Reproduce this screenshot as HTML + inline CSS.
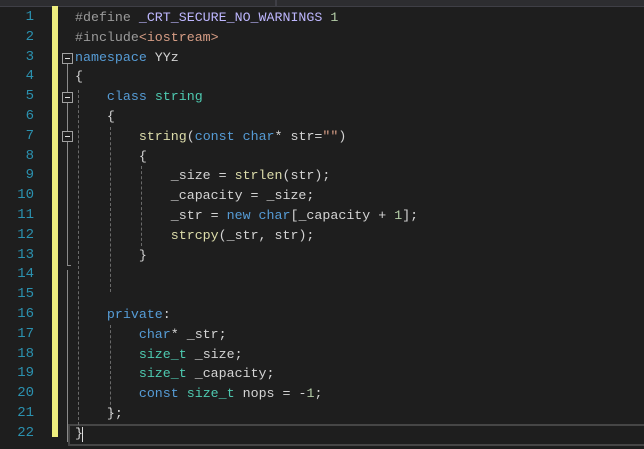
<!DOCTYPE html>
<html><head><style>
body{margin:0;width:644px;height:449px;background:#1e1e1e;overflow:hidden;position:relative;font-family:"Liberation Mono",monospace;}
.top{position:absolute;left:0;top:0;width:644px;height:6px;background:#2d2d30;border-bottom:1px solid #3f3f46;}
.ln{position:absolute;left:0;width:34px;text-align:right;color:#2b91af;font-size:14px;line-height:19.8px;}
.bar{position:absolute;left:52px;top:6px;width:6px;height:431px;background:#eded7e;}
.code{position:absolute;left:75px;top:8px;font-size:13.3px;line-height:19.8px;color:#d4d4d4;white-space:pre;}
.k{color:#569cd6}.t{color:#4ec9b0}.f{color:#dcdcaa}.p{color:#9b9b9b}.m{color:#beb7ff}.n{color:#b5cea8}.s{color:#d69d85}
.fold{position:absolute;left:62px;width:11px;height:11px;border:1px solid #a0a0a0;box-sizing:border-box;}
.fold:after{content:"";position:absolute;left:2px;top:4px;width:5px;height:1px;background:#ddd;}
.vl{position:absolute;width:1px;background:#8a8a8a;left:67px;}
.g{position:absolute;width:0;border-left:1px dashed #6a6a6a;}
.cur{position:absolute;left:68px;top:424px;width:580px;height:18px;border:2px solid #464646;border-right:none;}
</style></head><body>
<div class="top"></div>
<div style="position:absolute;left:275px;top:0;width:2px;height:6px;background:#3f3f46"></div>
<div class="ln" style="top:8px">1<br>2<br>3<br>4<br>5<br>6<br>7<br>8<br>9<br>10<br>11<br>12<br>13<br>14<br>15<br>16<br>17<br>18<br>19<br>20<br>21<br>22</div>
<div class="bar"></div>
<div class="cur"></div>
<div class="fold" style="top:53px"></div>
<div class="fold" style="top:92px"></div>
<div class="fold" style="top:131px"></div>
<div class="vl" style="top:64px;height:28px"></div>
<div class="vl" style="top:103px;height:28px"></div>
<div class="vl" style="top:142px;height:124px"></div>
<div style="position:absolute;left:67px;top:265px;width:4px;height:1px;background:#8a8a8a"></div>
<div class="vl" style="top:270px;height:172px"></div>
<div class="g" style="left:78px;top:90px;height:340px"></div>
<div class="g" style="left:110px;top:127px;height:165px"></div>
<div class="g" style="left:110px;top:325px;height:90px"></div>
<div class="g" style="left:141px;top:166px;height:80px"></div>
<div class="code"><span class="p">#define</span> <span class="m">_CRT_SECURE_NO_WARNINGS</span> <span class="n">1</span>
<span class="p">#include</span><span class="s">&lt;iostream&gt;</span>
<span class="k">namespace</span> YYz
{
    <span class="k">class</span> <span class="t">string</span>
    {
        <span class="f">string</span>(<span class="k">const</span> <span class="k">char</span>* str=<span class="s">""</span>)
        {
            _size = <span class="f">strlen</span>(str);
            _capacity = _size;
            _str = <span class="k">new</span> <span class="k">char</span>[_capacity + <span class="n">1</span>];
            <span class="f">strcpy</span>(_str, str);
        }


    <span class="k">private</span>:
        <span class="k">char</span>* _str;
        <span class="t">size_t</span> _size;
        <span class="t">size_t</span> _capacity;
        <span class="k">const</span> <span class="t">size_t</span> nops = -<span class="n">1</span>;
    };
}</div>
<div style="position:absolute;left:82px;top:427px;width:1px;height:15px;background:#dcdcdc"></div>
</body></html>
